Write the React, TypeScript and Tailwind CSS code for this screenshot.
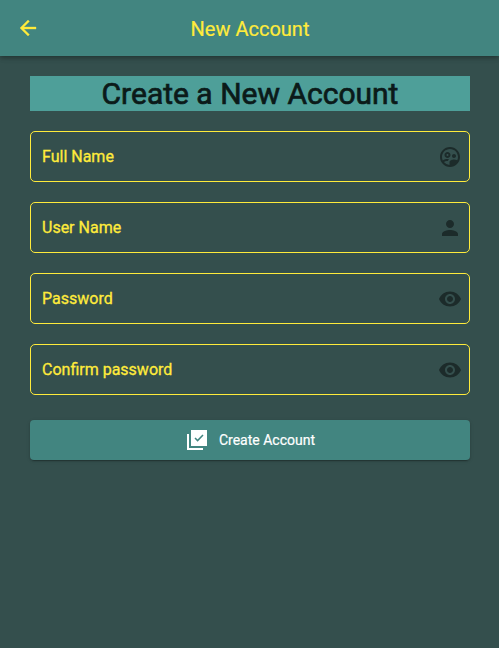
import React from "react";
import { MdOutlineSupervisedUserCircle, MdPerson, MdRemoveRedEye } from "react-icons/md";

const fields = [
  { label: "Full Name", Icon: MdOutlineSupervisedUserCircle },
  { label: "User Name", Icon: MdPerson },
  { label: "Password", Icon: MdRemoveRedEye },
  { label: "Confirm password", Icon: MdRemoveRedEye },
];

function BackIcon() {
  return (
    <svg width="24" height="24" viewBox="0 0 24 24" fill="currentColor" stroke="currentColor" strokeWidth="0.35" aria-hidden="true">
      <path d="M20 11H7.83l5.59-5.59L12 4l-8 8 8 8 1.41-1.41L7.83 13H20v-2z" />
    </svg>
  );
}

function LibraryCheckIcon() {
  return (
    <svg width="24" height="24" viewBox="0 0 24 24" fill="currentColor" aria-hidden="true">
      <path d="M22 2H6v16h16V2zM4 6H2v16h16v-2H4V6z" />
      <path d="M10 10l2.6 2.6L18 7" fill="none" stroke="#428580" strokeWidth="1.5" />
    </svg>
  );
}

export default function App() {
  return (
    <div className="flex h-screen w-full flex-col bg-[#344f4d] font-['Roboto',sans-serif]">
      <header className="z-10 flex h-14 shrink-0 items-center bg-[#428580] px-4 text-[#ffeb3b] shadow-[0_2px_4px_-1px_rgba(0,0,0,0.2),0_2px_5px_rgba(0,0,0,0.14),0_1px_8px_rgba(0,0,0,0.08)]">
        <button className="flex w-6 justify-center" aria-label="Back">
          <BackIcon />
        </button>
        <h1 className="flex-1 pr-[23px] pt-0.5 text-center text-xl font-normal [-webkit-text-stroke:0.2px_currentColor]">New Account</h1>
      </header>
      <main className="flex flex-col gap-5 px-[30px] pt-5 pr-[29px]">
        <h2 className="h-[35px] bg-[#4e9f99] text-center text-[30px] leading-[35px] font-normal text-[#0b1a19] [-webkit-text-stroke:0.7px_currentColor]">Create a New Account</h2>
        {fields.map(({ label, Icon }) => (
          <div key={label} className="flex h-[51px] items-center justify-between rounded-[5px] border border-[#ffeb3b] pr-[7px] pl-[11px] text-base text-[#ffeb3b] [-webkit-text-stroke:0.3px_currentColor]">
            <span>{label}</span>
            <Icon size={24} color="#1c2b2a" />
          </div>
        ))}
        <button className="mt-[5px] flex h-10 items-center justify-center gap-2.5 rounded-[4px] bg-[#428580] text-sm text-white shadow-[0_3px_1px_-2px_rgba(0,0,0,0.2),0_1px_2px_rgba(0,0,0,0.14),0_1px_4px_rgba(0,0,0,0.1)] [-webkit-text-stroke:0.2px_currentColor]">
          <LibraryCheckIcon />
          Create Account
        </button>
      </main>
    </div>
  );
}
